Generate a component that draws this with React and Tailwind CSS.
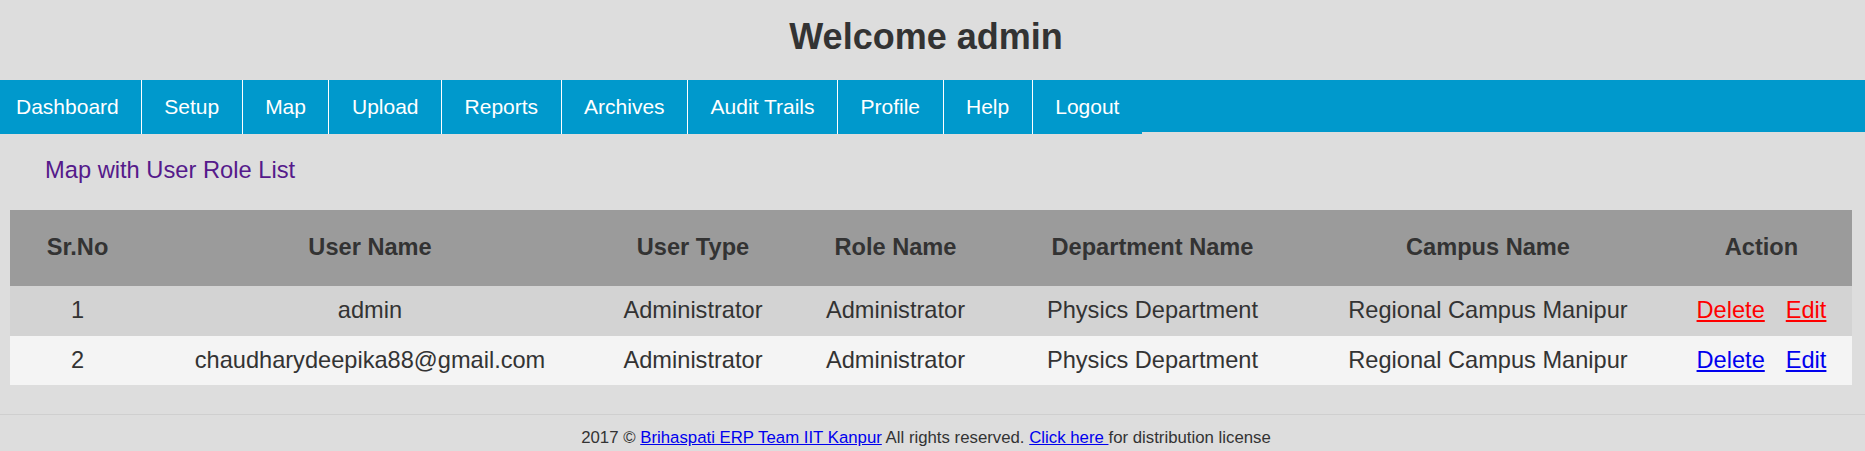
export default function App() {
  const navItems = ["Dashboard", "Setup", "Map", "Upload", "Reports", "Archives", "Audit Trails", "Profile", "Help", "Logout"];
  const rows = [
    { no: 1, user: "admin", type: "Administrator", role: "Administrator", dept: "Physics Department", campus: "Regional Campus Manipur", link: "text-[#ff0000]" },
    { no: 2, user: "chaudharydeepika88@gmail.com", type: "Administrator", role: "Administrator", dept: "Physics Department", campus: "Regional Campus Manipur", link: "text-[#0000ee]" },
  ];
  const headers = ["Sr.No", "User Name", "User Type", "Role Name", "Department Name", "Campus Name", "Action"];
  const widths = ["w-[135px]", "w-[450px]", "w-[196px]", "w-[209px]", "w-[305px]", "w-[366px]", "w-[181px]"];
  return (
    <div className="w-[1865px] min-h-[451px] bg-[#dddddd] text-[#333333] font-['Liberation_Sans',Arial,sans-serif] overflow-hidden">
      <div className="w-[1852px] h-[80px] pt-[16px] text-center">
        <h1 className="text-[36px] leading-[41px] font-bold text-[#333333]">Welcome admin</h1>
      </div>
      <nav className="h-[52px] bg-[#0099cc]">
        <ul className="flex h-[54px] w-fit bg-[#0099cc]">
          {navItems.map((item, i) => (
            <li
              key={item}
              className={`flex items-center text-[21px] text-white ${i === 0 ? "pl-[16px] pr-[22px]" : "px-[22.5px]"} ${i < navItems.length - 1 ? "border-r border-white" : ""}`}
            >
              {item}
            </li>
          ))}
        </ul>
      </nav>
      <div className="w-[1852px]">
        <div className="mt-[25px] pl-[45px] text-[23.7px] leading-[27px] text-[#551a8b]">Map with User Role List</div>
        <table className="mt-[26px] ml-[10px] w-[1842px] table-fixed border-collapse text-[23.6px]">
          <colgroup>
            {widths.map((w, i) => (
              <col key={i} className={w} />
            ))}
          </colgroup>
          <thead>
            <tr className="h-[76px] bg-[#9b9b9b]">
              {headers.map((h) => (
                <th key={h} className="p-0 text-center align-middle font-bold text-[#333333]">{h}</th>
              ))}
            </tr>
          </thead>
          <tbody>
            {rows.map((r, i) => (
              <tr key={r.no} className={i === 0 ? "h-[50px] bg-[#d3d3d3]" : "h-[49px] bg-[#f4f4f4]"}>
                <td className="p-0 text-center align-middle">{r.no}</td>
                <td className="p-0 text-center align-middle">{r.user}</td>
                <td className="p-0 text-center align-middle">{r.type}</td>
                <td className="p-0 text-center align-middle">{r.role}</td>
                <td className="p-0 text-center align-middle">{r.dept}</td>
                <td className="p-0 text-center align-middle">{r.campus}</td>
                <td className="p-0 text-center align-middle">
                  <a href="#" className={`underline ${r.link}`}>Delete</a>
                  <a href="#" className={`ml-[21px] underline ${r.link}`}>Edit</a>
                </td>
              </tr>
            ))}
          </tbody>
        </table>
      </div>
      <footer className="mt-[29px] border-t border-[#cfcfcf] pt-[14px]">
        <p className="w-[1852px] text-center text-[16.8px] leading-[18px] text-[#333333]">
          2017 © <a href="#" className="text-[#0000ee] underline">Brihaspati ERP Team IIT Kanpur</a> All rights reserved.{" "}
          <a href="#" className="text-[#0000ee] underline">Click here </a>for distribution license
        </p>
      </footer>
    </div>
  );
}
